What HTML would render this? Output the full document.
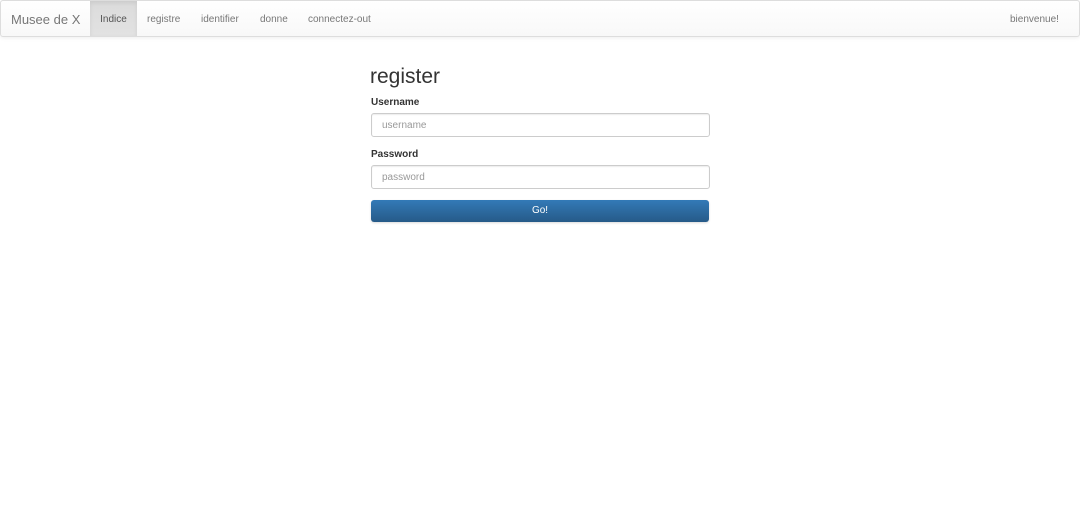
<!DOCTYPE html><html><head><style>
body{margin:0;width:1080px;height:507px;background:#fff;font-family:"Liberation Sans",sans-serif;position:relative;overflow:hidden}
.nav{position:absolute;left:0;top:0;width:1078px;height:35px;border:1px solid #ddd;border-radius:3px;background:linear-gradient(#fff,#f8f8f8);box-shadow:0 1px 4px rgba(0,0,0,.07)}
.a{position:absolute;top:0;height:35px;line-height:37px;font-size:10px;color:#777}
.act{background:linear-gradient(#dbdbdb,#e2e2e2);box-shadow:inset 0 2px 4px rgba(0,0,0,.08);color:#555}
.l{position:absolute;left:371px;font-size:10px;font-weight:bold;color:#333}
.i{position:absolute;left:371px;width:337px;height:22px;border:1px solid #ccc;border-radius:3px;box-shadow:inset 0 1px 1px rgba(0,0,0,.075);font-size:10px;color:#999;line-height:24px;text-indent:10px}
</style></head><body>
<div class="nav">
<div class="a" style="left:10px;font-size:13px;color:#777">Musee de X</div>
<div class="a act" style="left:89px;width:47px;text-align:center">Indice</div>
<div class="a" style="left:146px">registre</div>
<div class="a" style="left:200px">identifier</div>
<div class="a" style="left:259px">donne</div>
<div class="a" style="left:307px">connectez-out</div>
<div class="a" style="left:1009px">bienvenue!</div>
</div>
<div style="position:absolute;left:370px;top:65px;font-size:21px;color:#333">register</div>
<div class="l" style="top:97px">Username</div>
<div class="i" style="top:113px">username</div>
<div class="l" style="top:149px">Password</div>
<div class="i" style="top:165px">password</div>
<div style="position:absolute;left:371px;top:200px;width:338px;height:22px;border-radius:3px;background:linear-gradient(#337ab7,#265a88);color:#fff;font-size:10px;text-align:center;line-height:22px;box-shadow:0 1px 2px rgba(0,0,0,.15)">Go!</div>
</body></html>
